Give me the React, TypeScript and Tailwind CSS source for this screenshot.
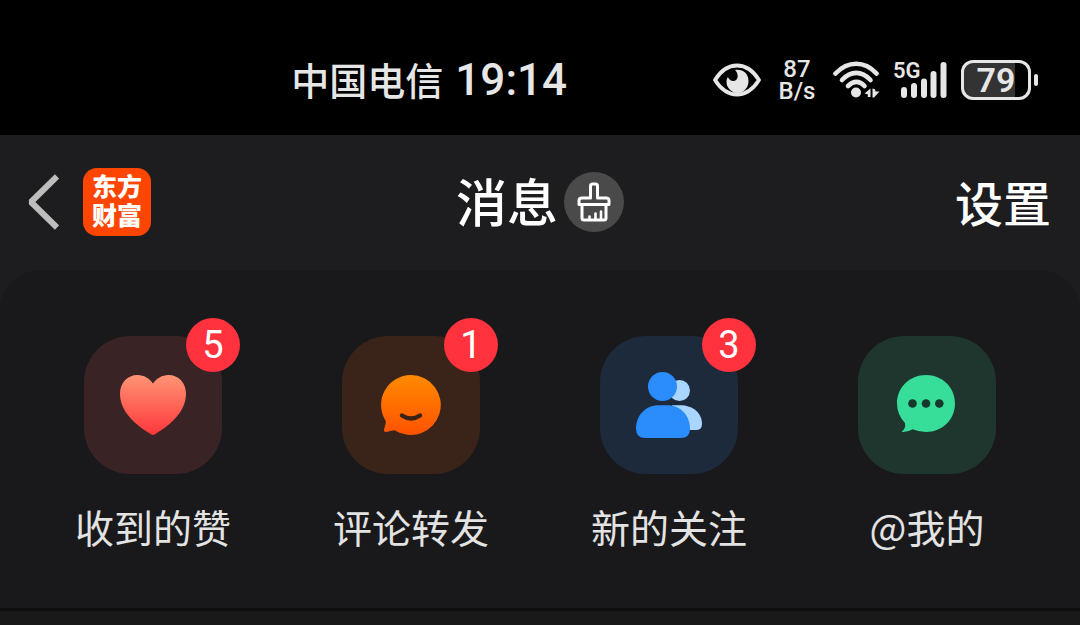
import type { ReactNode } from "react"

function EyeIcon() {
  return (
    <svg width="48" height="34" viewBox="0 0 48 34" fill="none" aria-hidden>
      <path d="M2 17C8 7.500 15.500 2.500 24 2.500S40 7.500 46 17C40 26.500 32.500 31.500 24 31.500S8 26.500 2 17Z" stroke="#e6e6e6" strokeWidth="3.800" strokeLinejoin="round" />
      <path d="M22 7C30 6 35.500 10.500 35.500 18S30 30 24.500 30 13.500 25 13.500 19C13.500 17 14 15.500 14.800 14 16.500 17 18.500 18.500 21 18 25.500 17 26 11 22 7Z" fill="#e6e6e6" />
    </svg>
  )
}

function WifiIcon() {
  return (
    <svg width="48" height="38" viewBox="0 0 48 38" fill="none" aria-hidden>
      <g stroke="#e6e6e6" strokeWidth="4.600" strokeLinecap="round">
        <path d="M2.500 12.500C15 -0.500 31.500 -0.500 43.500 12.500" />
        <path d="M9 19C18 9.500 28.500 9.500 37.500 19" />
        <path d="M15 25C20.500 19.500 26.500 19.500 31.500 25" />
      </g>
      <circle cx="23" cy="31.500" r="5" fill="#e6e6e6" />
      <path d="M37.500 27.500V36H34.800V33.200L31.500 32.500 37.500 27.500ZM39.500 27.500L42 28.300 42.500 30.500H46.500L41 36.500H39.500Z" fill="#e6e6e6" />
    </svg>
  )
}

function SignalIcon() {
  return (
    <svg width="56" height="38" viewBox="0 0 56 38" aria-hidden>
      <g fill="#e6e6e6">
        <rect x="8" y="26" width="6" height="11" rx="3" />
        <rect x="18" y="22" width="6" height="15" rx="3" />
        <rect x="28" y="17.500" width="6" height="19.500" rx="3" />
        <rect x="37.500" y="10" width="6" height="27" rx="3" />
        <rect x="47.500" y="1" width="6" height="36" rx="3" />
      </g>
    </svg>
  )
}

function BrushIcon() {
  return (
    <svg width="34" height="40" viewBox="0 0 34 40" fill="none" stroke="#fff" strokeWidth="3" strokeLinejoin="round" strokeLinecap="round" aria-hidden>
      <path d="M13.500 16V4.200Q13.500 2 15.500 2H18.500Q20.500 2 20.500 4.200V16H29Q32 16 32 18.500V22.500H2V18.500Q2 16 5 16H13.500Z" />
      <path d="M5 23V36Q5 38 7 38H27Q29 38 29 36V23" />
      <path d="M12.500 37V34.500M18.500 37V31.500M24 37V29.500" strokeWidth="2.600" />
    </svg>
  )
}

function HeartIcon() {
  return (
    <svg width="66" height="60" viewBox="0 0 66 60" aria-hidden>
      <defs>
        <linearGradient id="heart" x1="0" y1="0" x2="0" y2="1">
          <stop stopColor="#ff9474" />
          <stop offset="1" stopColor="#ff373b" />
        </linearGradient>
      </defs>
      <path d="M33 8.500C29.500 3.500 24 0 17.500 0 7.500 0 0 8 0 18.500 0 36 14 49 31 59.300Q33 60.500 35 59.300C52 49 66 36 66 18.500 66 8 58.500 0 48.500 0 42 0 36.500 3.500 33 8.500Z" fill="url(#heart)" />
    </svg>
  )
}

function CommentIcon() {
  return (
    <svg width="60" height="60" viewBox="0 0 60 60" aria-hidden>
      <defs>
        <linearGradient id="comment" x1="0" y1="0" x2="0" y2="1">
          <stop stopColor="#ff8a00" />
          <stop offset="1" stopColor="#ff5200" />
        </linearGradient>
      </defs>
      <path d="M30 0A30 30 0 1 1 13.500 55.200Q9 56 5.500 57 2.500 57.500 3 54.500 4.500 50 5 46.500A30 30 0 0 1 30 0Z" fill="url(#comment)" />
      <path d="M21 40.500Q30 46.500 39 40.500" fill="none" stroke="#3c2115" strokeWidth="4.400" strokeLinecap="round" />
    </svg>
  )
}

function PeopleIcon() {
  return (
    <svg width="66" height="66" viewBox="0 0 66 66" aria-hidden>
      <circle cx="43.500" cy="18.500" r="10.500" fill="#a8d6ff" />
      <path d="M36 33.300H44C57 33.300 66 41 66 52Q66 58 60 58H48Z" fill="#a8d6ff" />
      <circle cx="26.500" cy="14.500" r="14.500" fill="#2a8dfb" />
      <path d="M23 33.300H31C45 33.300 54 44 54 56.500Q54 66 44.500 66H9.500Q0 66 0 56.500C0 44 9 33.300 23 33.300Z" fill="#2a8dfb" />
    </svg>
  )
}

function MentionIcon() {
  return (
    <svg width="60" height="60" viewBox="0 0 60 60" aria-hidden>
      <path d="M29 0C45.500 0 58 12.500 58 28.500S45.500 57 29 57Q22 57 15.500 54.300 11 57.500 4.500 57 9 53.500 8 48 0 39.500 0 28.500C0 12.500 12.500 0 29 0Z" fill="#37de9a" />
      <g fill="#17392c">
        <circle cx="15.500" cy="28.500" r="4.300" />
        <circle cx="29" cy="28.500" r="4.300" />
        <circle cx="42.300" cy="28.500" r="4.300" />
      </g>
    </svg>
  )
}

type Entry = { label: string; tile: string; icon: ReactNode; count?: number }

const entries: Entry[] = [
  { label: "收到的赞", tile: "bg-[#3a2325]", icon: <HeartIcon />, count: 5 },
  { label: "评论转发", tile: "bg-[#3a2318]", icon: <CommentIcon />, count: 1 },
  { label: "新的关注", tile: "bg-[#1c2a3c]", icon: <PeopleIcon />, count: 3 },
  { label: "@我的", tile: "bg-[#1f362f]", icon: <MentionIcon /> },
]

function StatusBar() {
  return (
    <div className="flex h-[135px] items-center justify-end bg-black pt-6 pr-[42px] text-[#e6e6e6]">
      <div className="mr-[146px] flex items-center gap-3 font-medium">
        <span className="pb-0.5 text-[38px] leading-none">中国电信</span>
        <span className="font-[Roboto] text-[44px] leading-none">19:14</span>
      </div>
      <div className="flex items-center gap-4">
        <EyeIcon />
        <div className="w-[40px] text-center font-[Roboto] text-[24px] leading-[22px] font-medium">
          <div>87</div>
          <div>B/s</div>
        </div>
        <div className="flex items-center gap-3">
          <WifiIcon />
          <div className="relative">
            <SignalIcon />
            <span className="absolute top-0 left-0 font-[Roboto] text-[22px] leading-[20px] font-semibold">5G</span>
          </div>
          <div className="flex items-center gap-[3px]">
            <div className="flex h-[40px] w-[70px] items-center justify-center rounded-xl border-[3px] border-[#e6e6e6] bg-linear-to-r from-[#333] from-80% to-black to-80% font-[Roboto] text-[34px] leading-none font-semibold">
              79
            </div>
            <div className="h-3 w-1 rounded-full bg-[#e6e6e6]" />
          </div>
        </div>
      </div>
    </div>
  )
}

function Header() {
  return (
    <header className="grid h-[135px] grid-cols-[1fr_auto_1fr] items-center px-[27px] pb-0.5 text-white">
      <div className="flex items-center gap-6">
        <button type="button" aria-label="返回">
          <svg width="32" height="56" viewBox="0 0 32 56" fill="none" stroke="#bdbdbd" strokeWidth="6" aria-hidden>
            <path d="M30 2.500L4 28 30 53.500" strokeLinejoin="bevel" />
          </svg>
        </button>
        <a
          href="#home"
          className="flex h-[68px] w-[68px] flex-col items-center justify-center rounded-[14px] bg-[#fe4602] pb-1 text-[25px] leading-[29px] font-black"
        >
          <span>东方</span>
          <span>财富</span>
        </a>
      </div>
      <div className="flex items-center gap-1.5">
        <h1 className="pb-0.5 text-[51px] leading-none font-medium">消息</h1>
        <button type="button" aria-label="清除未读" className="flex h-[60px] w-[60px] items-center justify-center rounded-full bg-[#4a4a4b]">
          <BrushIcon />
        </button>
      </div>
      <button type="button" className="justify-self-end pr-0.5 pb-0.5 text-[48px] leading-none font-medium">
        设置
      </button>
    </header>
  )
}

export default function App() {
  return (
    <div className="min-h-screen bg-[#1d1d1f] font-['Noto_Sans_CJK_SC',sans-serif]">
      <StatusBar />
      <Header />
      <main className="rounded-t-[40px] bg-[#19191b]">
        <nav className="grid grid-cols-4 px-6 pt-[66px] pb-[53px]">
          {entries.map((entry) => (
            <a key={entry.label} href="#messages" className="flex flex-col items-center gap-[23px]">
              <span className={`relative flex h-[138px] w-[138px] items-center justify-center rounded-[46px] ${entry.tile}`}>
                {entry.icon}
                {entry.count && (
                  <span className="absolute -top-[18px] -right-[18px] flex h-[54px] w-[54px] items-center justify-center rounded-full bg-[#ff323e] font-[Roboto] text-[38px] leading-none text-white">
                    {entry.count}
                  </span>
                )}
              </span>
              <span className="text-[39px] leading-[58px] text-[#e3e3e3]">{entry.label}</span>
            </a>
          ))}
        </nav>
        <div className="h-[3px] bg-[#0e0e0e]" />
        <div className="h-[14px] bg-[#19191a]" />
      </main>
    </div>
  )
}
